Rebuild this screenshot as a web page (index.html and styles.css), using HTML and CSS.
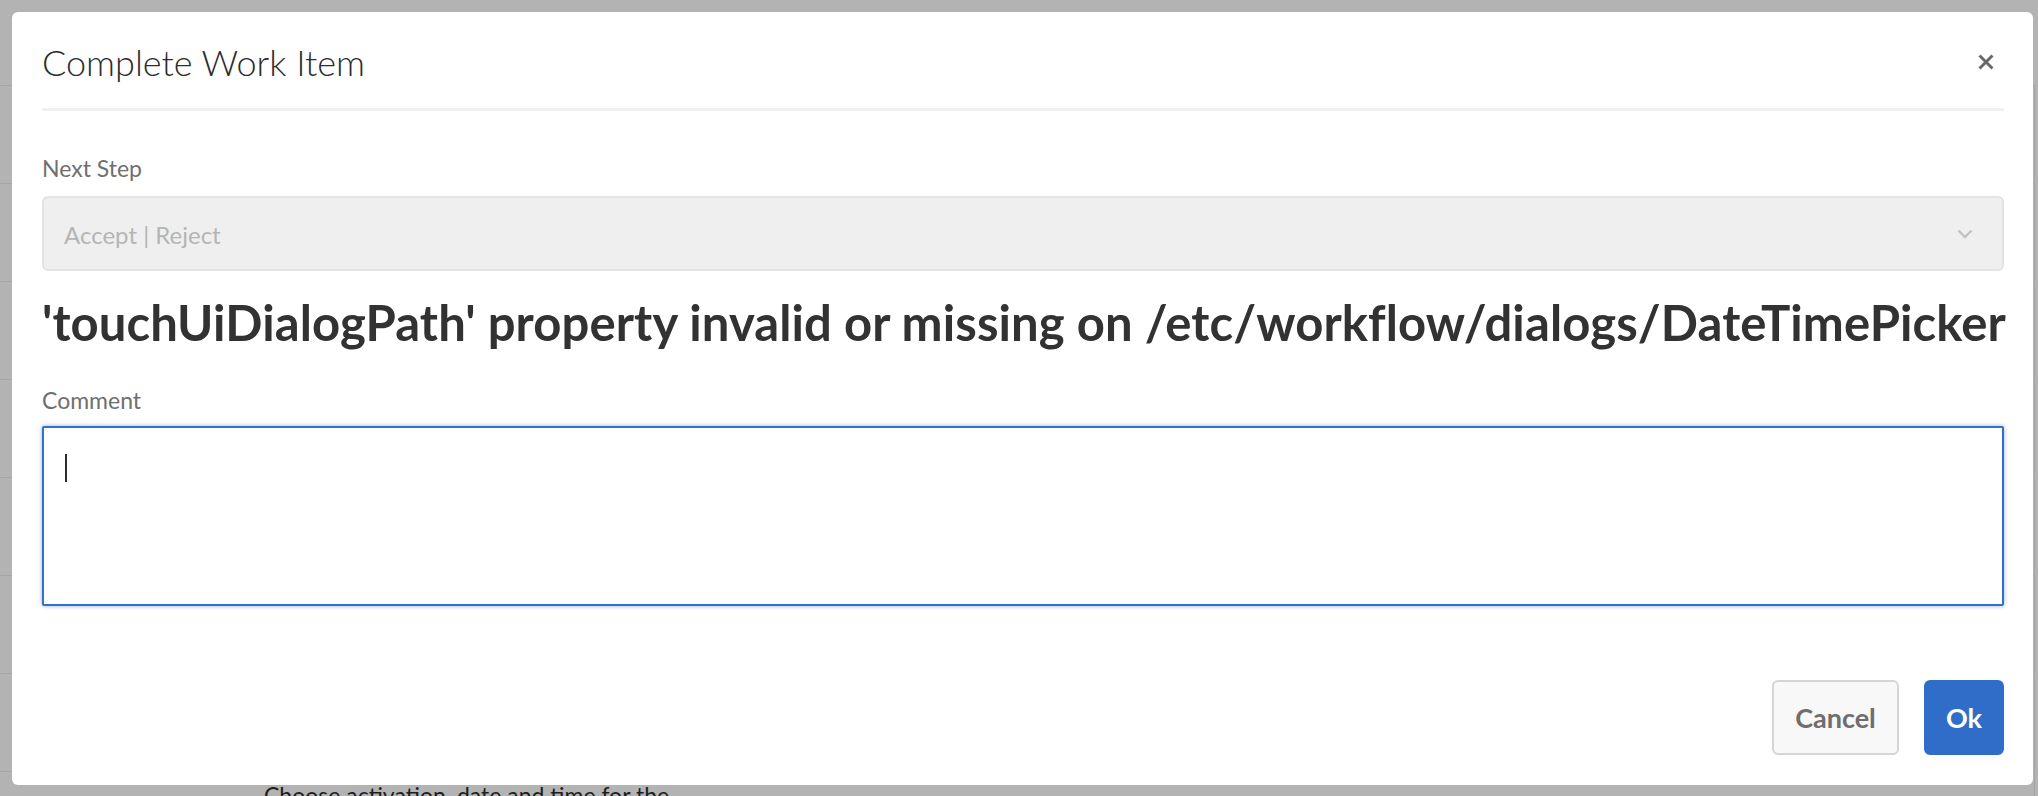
FILE: index.html
```html
<!DOCTYPE html>
<html lang="en">
<head>
<meta charset="utf-8">
<title>Complete Work Item</title>
<link rel="stylesheet" href="styles.css">
</head>
<body>
<div class="page">
  <div class="page-top"></div>
  <div class="page-rows">
    <div class="page-row"></div>
    <div class="page-row"></div>
    <div class="page-row"></div>
    <div class="page-row"></div>
    <div class="page-row"></div>
    <div class="page-row"></div>
    <div class="page-row"></div>
    <div class="page-row page-row-last"><span class="page-text">Choose activation, date and time for the</span></div>
  </div>
</div>

<div class="dialog" role="dialog" aria-labelledby="dlg-title">
  <header class="dialog-header">
    <h2 class="dialog-title" id="dlg-title">Complete Work Item</h2>
    <button class="close" type="button" aria-label="Close">
      <svg width="16" height="16" viewBox="0 0 16 16" aria-hidden="true">
        <path d="M1.5 1.5 L14.5 14.5 M14.5 1.5 L1.5 14.5" stroke="#676767" stroke-width="2.9" fill="none"/>
      </svg>
    </button>
  </header>
  <div class="dialog-body">
    <label class="field-label">Next Step</label>
    <div class="select" aria-disabled="true">
      <span class="select-value">Accept | Reject</span>
      <svg class="chevron" width="16" height="10" viewBox="0 0 16 10" aria-hidden="true">
        <path d="M1.5 1.5 L8 8 L14.5 1.5" stroke="#c2c2c2" stroke-width="2.4" fill="none"/>
      </svg>
    </div>
    <h1 class="error-heading">'touchUiDialogPath' property invalid or missing on /etc/workflow/dialogs/DateTimePicker</h1>
    <label class="field-label comment-label" for="comment">Comment</label>
    <div class="textarea-wrap">
      <textarea id="comment" class="textarea"></textarea>
      <span class="caret"></span>
    </div>
  </div>
  <footer class="dialog-footer">
    <button class="btn btn-secondary" type="button">Cancel</button>
    <button class="btn btn-primary" type="button">Ok</button>
  </footer>
</div>
</body>
</html>
```
FILE: styles.css
```css
* { box-sizing: border-box; }

html, body {
  margin: 0;
  padding: 0;
}

body {
  width: 2038px;
  height: 796px;
  overflow: hidden;
  background: #b3b3b3;
  font-family: Lato, "Noto Sans", sans-serif;
  position: relative;
}

/* underlying page, dimmed */
.page {
  height: 796px;
  overflow: hidden;
}

.page-top { height: 85px; }

.page-rows {
  width: 2035px;
  border-right: 1px solid #a4a4a4;
}

.page-row {
  height: 98px;
  border-top: 1px solid #a6a6a6;
  padding: 10px 0 0 264px;
}

.page-row-last {
  height: 25px;
  overflow: hidden;
}

.page-text {
  display: block;
  font-size: 23px;
  line-height: 26px;
  color: #1e1e1e;
}

/* dialog */
.dialog {
  position: absolute;
  left: 12px;
  top: 12px;
  width: 2021px;
  height: 773px;
  background: #fff;
  border-radius: 6px;
  padding: 0 29px 30px 30px;
  display: flex;
  flex-direction: column;
}

.dialog-header {
  display: flex;
  align-items: center;
  justify-content: space-between;
  padding: 28px 10px 24px 0;
  border-bottom: 3px solid #f0f0f0;
}

.dialog-title {
  margin: 0;
  font-size: 36px;
  line-height: 44px;
  font-weight: 300;
  color: #2c2c2c;
}

.close {
  width: 16px;
  height: 16px;
  padding: 0;
  border: 0;
  background: none;
  display: flex;
}

.dialog-body {
  padding-top: 43px;
}

.field-label {
  display: block;
  font-size: 23px;
  line-height: 28px;
  color: #6f6f6f;
  margin-bottom: 14px;
}

.select {
  height: 75px;
  border: 2px solid #e3e3e3;
  background: #efefef;
  border-radius: 6px;
  display: flex;
  align-items: center;
  justify-content: space-between;
  padding: 1px 29px 0 20px;
  font-size: 24px;
  color: #b5b5b5;
}

.error-heading {
  margin: 21px 0 0;
  font-size: 49px;
  line-height: 60px;
  font-weight: 700;
  letter-spacing: 0.1px;
  color: #323232;
  white-space: nowrap;
}

.comment-label {
  margin-top: 34px;
  margin-bottom: 12px;
}

.textarea-wrap {
  position: relative;
  height: 180px;
}

.textarea {
  display: block;
  width: 100%;
  height: 100%;
  border: 2px solid #3470c8;
  border-radius: 2px;
  box-shadow: 0 0 4px rgba(52, 112, 200, 0.55);
  resize: none;
  outline: none;
  font-family: inherit;
  font-size: 24px;
}

.caret {
  position: absolute;
  left: 23px;
  top: 28px;
  width: 2px;
  height: 28px;
  background: #2c2c2c;
}

.dialog-footer {
  margin-top: auto;
  display: flex;
  justify-content: flex-end;
  gap: 25px;
}

.btn {
  height: 75px;
  border-radius: 6px;
  font-family: inherit;
  font-size: 27px;
  font-weight: 700;
  padding: 0;
}

.btn-secondary {
  width: 127px;
  border: 2px solid #d5d5d5;
  background: #f8f8f8;
  color: #6e6e6e;
}

.btn-primary {
  width: 80px;
  border: 2px solid #2f6dc9;
  background: #2f6dc9;
  color: #fff;
}
```
